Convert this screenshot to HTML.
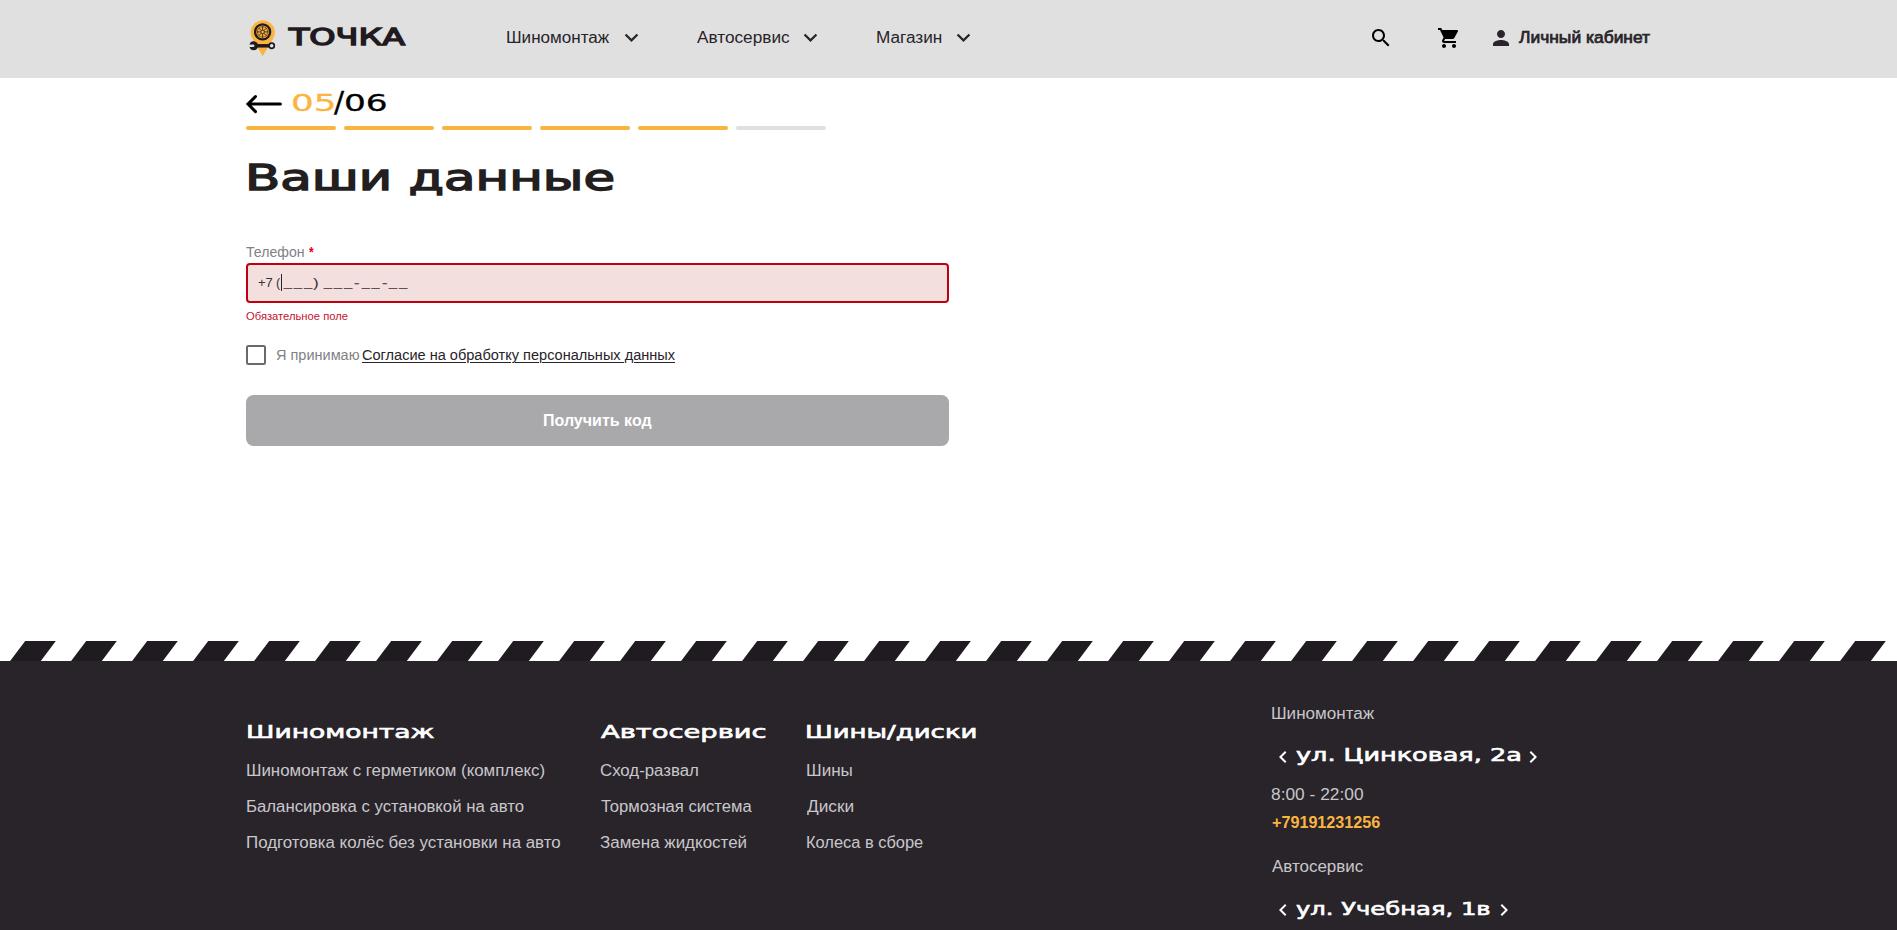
<!DOCTYPE html>
<html lang="ru">
<head>
<meta charset="utf-8">
<title>Точка — Ваши данные</title>
<style>
html,body{margin:0;padding:0}
body{width:1897px;height:930px;position:relative;overflow:hidden;background:#fff;font-family:"Liberation Sans",sans-serif;color:#28242a}
.abs{position:absolute}
.t{position:absolute;display:block;white-space:nowrap;line-height:1;transform-origin:0 0;margin:0;padding:0;border:0;background:none;text-decoration:none;letter-spacing:normal;text-align:left;cursor:default}
.hdr{left:0;top:0;width:1897px;height:78px;background:#e0e0e0}
.bar{position:absolute;top:126px;width:90px;height:4px;border-radius:2px;background:#fbb440}
.bar.off{background:#e0e0e0}
.input{left:246px;top:263px;width:699px;height:36px;border:2px solid #bf0010;border-radius:4px;background:#f3dfde}
.caret{left:281px;top:274px;width:1px;height:17px;background:#28242a}
.check{left:246px;top:345px;width:16px;height:16px;border:2px solid #6a696b;border-radius:2.5px;background:#fff}
.button{left:246px;top:395px;width:703px;height:51px;border-radius:7.5px;background:#a9a9ab}
.footer{left:0;top:661px;width:1897px;height:269px;background:#28242a}
svg{position:absolute;overflow:visible}
</style>
</head>
<body>
<div class="abs hdr"></div>

<!-- logo icon -->
<svg style="left:0;top:0" width="300" height="78" viewBox="0 0 300 78">
  <path d="M262.7 56.2 L252.4 38.8 A12.15 12.15 0 1 1 273.1 38.8 Z" fill="#fbb440"/>
  <circle cx="262.6" cy="31.9" r="7.55" fill="#f9ae38" stroke="#1f1b20" stroke-width="2.3"/>
  <g stroke="#1f1b20" fill="none">
    <circle cx="262.6" cy="31.9" r="5.3" stroke-width="0.55"/>
    <path stroke-width="0.85" d="M262.6 26.2v11.4M256.9 31.9h11.4M258.6 27.9l8 8M266.6 27.9l-8 8"/>
    <circle cx="262.6" cy="31.9" r="1.7" fill="#fdb94a" stroke-width="0.7"/>
  </g>
  <rect x="255.5" y="44.05" width="13.5" height="3.5" fill="#1f1b20"/>
  <circle cx="253.6" cy="45.8" r="4.5" fill="#1f1b20"/>
  <path d="M247.5 44.55H253.2A1.25 1.25 0 0 1 253.2 47.05H247.5Z" fill="#e0e0e0"/>
  <path d="M248.2 40.5L250.6 41.8L249.2 44.55H247.5ZM248.2 51.1L250.6 49.8L249.2 47.05H247.5Z" fill="#e0e0e0"/>
  <circle cx="271.7" cy="45.8" r="2.6" fill="#ebebeb" stroke="#1f1b20" stroke-width="1.7"/>
</svg>

<!-- nav chevrons -->
<svg style="left:618px;top:24px" width="27" height="27" viewBox="0 0 24 24"><path fill="#28242a" d="M16.59 8.59L12 13.17 7.41 8.59 6 10l6 6 6-6z"/></svg>
<svg style="left:797.3px;top:24px" width="27" height="27" viewBox="0 0 24 24"><path fill="#28242a" d="M16.59 8.59L12 13.17 7.41 8.59 6 10l6 6 6-6z"/></svg>
<svg style="left:949.7px;top:24px" width="27" height="27" viewBox="0 0 24 24"><path fill="#28242a" d="M16.59 8.59L12 13.17 7.41 8.59 6 10l6 6 6-6z"/></svg>

<!-- right icons -->
<svg style="left:1369px;top:26px" width="24" height="24" viewBox="0 0 24 24"><path fill="#000" d="M15.5 14h-.79l-.28-.27C15.41 12.59 16 11.11 16 9.5 16 5.91 13.09 3 9.5 3S3 5.91 3 9.5 5.91 16 9.5 16c1.61 0 3.09-.59 4.23-1.57l.27.28v.79l5 4.99L20.49 19l-4.99-5zm-6 0C7.01 14 5 11.99 5 9.5S7.01 5 9.5 5 14 7.01 14 9.5 11.99 14 9.5 14z"/></svg>
<svg style="left:1437px;top:26px" width="24" height="24" viewBox="0 0 24 24"><path fill="#000" d="M7 18c-1.1 0-1.99.9-1.99 2S5.900 22 7 22s2-.9 2-2-.9-2-2-2zM1 2v2h2l3.600 7.590-1.350 2.450c-.16.28-.25.61-.25.96 0 1.100.9 2 2 2h12v-2H7.420c-.14 0-.25-.11-.25-.25l.03-.12.9-1.630h7.450c.75 0 1.410-.41 1.750-1.030l3.580-6.490c.08-.14.12-.31.12-.48 0-.55-.45-1-1-1H5.210l-.94-2H1zm16 16c-1.100 0-1.990.9-1.990 2s.89 2 1.990 2 2-.9 2-2-.9-2-2-2z"/></svg>
<svg style="left:1489px;top:26px" width="24" height="24" viewBox="0 0 24 24"><path fill="#28242a" d="M12 12c2.210 0 4-1.790 4-4s-1.790-4-4-4-4 1.790-4 4 1.790 4 4 4zm0 2c-2.670 0-8 1.340-8 4v2h16v-2c0-2.660-5.330-4-8-4z"/></svg>

<!-- back arrow -->
<svg style="left:0;top:80px" width="300" height="50" viewBox="0 80 300 50"><path d="M255.5 96.5L248 104.05L255.5 111.6M248.3 104.05H280.4" fill="none" stroke="#000" stroke-width="3" stroke-linecap="round" stroke-linejoin="miter"/></svg>

<div class="bar" style="left:246px"></div>
<div class="bar" style="left:344px"></div>
<div class="bar" style="left:442px"></div>
<div class="bar" style="left:540px"></div>
<div class="bar" style="left:638px"></div>
<div class="bar off" style="left:736px"></div>

<div class="abs input"></div>
<div class="abs caret"></div>
<div class="abs check"></div>
<div class="abs button"></div>

<!-- stripes -->
<svg style="left:0;top:641px" width="1897" height="20" viewBox="0 0 1897 20">
  <defs><pattern id="st" x="0" y="0" width="61" height="20" patternUnits="userSpaceOnUse"><polygon points="25.2,0 55.8,0 40.8,20 10.1,20" fill="#1f1b20"/></pattern></defs>
  <rect x="0" y="0" width="1897" height="20" fill="url(#st)"/>
</svg>
<div class="abs footer"></div>

<!-- footer chevrons -->
<svg style="left:1271px;top:744.5px" width="24" height="24" viewBox="0 0 24 24"><path fill="#fff" d="M15.41 7.41L14 6l-6 6 6 6 1.410-1.410L10.830 12z"/></svg>
<svg style="left:1521px;top:744.5px" width="24" height="24" viewBox="0 0 24 24"><path fill="#fff" d="M10 6L8.590 7.410 13.170 12l-4.580 4.590L10 18l6-6z"/></svg>
<svg style="left:1271px;top:898px" width="24" height="24" viewBox="0 0 24 24"><path fill="#fff" d="M15.41 7.41L14 6l-6 6 6 6 1.410-1.410L10.830 12z"/></svg>
<svg style="left:1492px;top:898px" width="24" height="24" viewBox="0 0 24 24"><path fill="#fff" d="M10 6L8.590 7.410 13.170 12l-4.580 4.590L10 18l6-6z"/></svg>

<header>
<a class="t" style="left:289px;top:26px;font-family:'DejaVu Sans', 'Liberation Sans', sans-serif;font-size:23.75px;font-weight:400;color:#1f1b20;transform:scaleX(1.4037);-webkit-text-stroke:0.06em;">ТОЧКА</a>
<a class="t" style="left:506px;top:30px;font-family:'Liberation Sans', sans-serif;font-size:16.00px;font-weight:400;color:#28242a;transform:scaleX(1.0651);">Шиномонтаж</a>
<a class="t" style="left:697px;top:30px;font-family:'Liberation Sans', sans-serif;font-size:16.00px;font-weight:400;color:#28242a;transform:scaleX(1.0759);">Автосервис</a>
<a class="t" style="left:876px;top:30px;font-family:'Liberation Sans', sans-serif;font-size:16.00px;font-weight:400;color:#28242a;transform:scaleX(1.0730);">Магазин</a>
<a class="t" style="left:1519px;top:30px;font-family:'Liberation Sans', sans-serif;font-size:16.00px;font-weight:400;color:#28242a;transform:scaleX(1.0890);-webkit-text-stroke:0.7px;">Личный кабинет</a>
</header>
<main>
<span class="t" style="left:291px;top:91px;font-family:'DejaVu Sans', 'Liberation Sans', sans-serif;font-size:23.25px;font-weight:400;color:#fbb440;transform:scaleX(1.5372);-webkit-text-stroke:0.3px;">05</span>
<span class="t" style="left:334px;top:88px;font-family:'DejaVu Sans', 'Liberation Sans', sans-serif;font-size:28.75px;font-weight:400;color:#000;transform:scaleX(1.0405);-webkit-text-stroke:0.3px;">/</span>
<span class="t" style="left:344px;top:91px;font-family:'DejaVu Sans', 'Liberation Sans', sans-serif;font-size:23.25px;font-weight:400;color:#000;transform:scaleX(1.4769);-webkit-text-stroke:0.3px;">06</span>
<h1 class="t" style="left:245px;top:160px;font-family:'DejaVu Sans', 'Liberation Sans', sans-serif;font-size:36.25px;font-weight:400;color:#231f20;transform:scaleX(1.4181);-webkit-text-stroke:0.04em;">Ваши данные</h1>
<label class="t" style="left:246px;top:246px;font-family:'Liberation Sans', sans-serif;font-size:13.75px;font-weight:400;color:#828084;transform:scaleX(1.0272);">Телефон</label>
<span class="t" style="left:309px;top:245px;font-family:'Liberation Sans', sans-serif;font-size:14.00px;font-weight:700;color:#e3001b;transform:scaleX(0.8529);">*</span>
<span class="t" style="left:258px;top:277px;font-family:'Liberation Sans', sans-serif;font-size:12.50px;font-weight:400;color:#3a3236;transform:scaleX(1.0410);">+7</span>
<span class="t" style="left:276px;top:277px;font-family:'Liberation Sans', sans-serif;font-size:12.50px;font-weight:400;color:#3a3236;transform:scaleX(1.0061);">(</span>
<span class="t" style="left:284px;top:276px;font-family:'Liberation Sans', sans-serif;font-size:12.50px;font-weight:400;color:#5c5154;transform:scaleX(1.1274);letter-spacing:2px;-webkit-text-stroke:0.3px;">___</span>
<span class="t" style="left:313px;top:277px;font-family:'Liberation Sans', sans-serif;font-size:12.50px;font-weight:400;color:#3a3236;transform:scaleX(1.3716);">)</span>
<span class="t" style="left:324px;top:276px;font-family:'Liberation Sans', sans-serif;font-size:12.50px;font-weight:400;color:#5c5154;transform:scaleX(1.1274);letter-spacing:2px;-webkit-text-stroke:0.3px;">___</span>
<span class="t" style="left:354px;top:277px;font-family:'Liberation Sans', sans-serif;font-size:12.50px;font-weight:400;color:#5c5154;transform:scaleX(1.3095);-webkit-text-stroke:0.3px;">-</span>
<span class="t" style="left:362px;top:276px;font-family:'Liberation Sans', sans-serif;font-size:12.50px;font-weight:400;color:#5c5154;transform:scaleX(1.0955);letter-spacing:2px;-webkit-text-stroke:0.3px;">__</span>
<span class="t" style="left:382px;top:277px;font-family:'Liberation Sans', sans-serif;font-size:12.50px;font-weight:400;color:#5c5154;transform:scaleX(1.3095);-webkit-text-stroke:0.3px;">-</span>
<span class="t" style="left:389px;top:276px;font-family:'Liberation Sans', sans-serif;font-size:12.50px;font-weight:400;color:#5c5154;transform:scaleX(1.1343);letter-spacing:2px;-webkit-text-stroke:0.3px;">__</span>
<p class="t" style="left:246px;top:311px;font-family:'Liberation Sans', sans-serif;font-size:10.75px;font-weight:400;color:#c4122f;transform:scaleX(1.0430);">Обязательное поле</p>
<span class="t" style="left:276px;top:348px;font-family:'Liberation Sans', sans-serif;font-size:14.00px;font-weight:400;color:#828084;transform:scaleX(1.0361);">Я принимаю</span>
<a class="t" style="left:362px;top:348px;font-family:'Liberation Sans', sans-serif;font-size:14.00px;font-weight:400;color:#28242a;transform:scaleX(1.0391);text-decoration:underline;text-underline-offset:1.5px;text-decoration-thickness:1px;">Согласие на обработку персональных данных</a>
<button class="t" style="left:543px;top:413px;font-family:'Liberation Sans', sans-serif;font-size:16.00px;font-weight:700;color:#fff;transform:scaleX(1.0015);">Получить код</button>
</main>
<footer>
<h3 class="t" style="left:246px;top:724px;font-family:'DejaVu Sans', 'Liberation Sans', sans-serif;font-size:17.50px;font-weight:400;color:#fff;transform:scaleX(1.5166);-webkit-text-stroke:0.036em;">Шиномонтаж</h3>
<h3 class="t" style="left:601px;top:724px;font-family:'DejaVu Sans', 'Liberation Sans', sans-serif;font-size:17.50px;font-weight:400;color:#fff;transform:scaleX(1.5620);-webkit-text-stroke:0.036em;">Автосервис</h3>
<h3 class="t" style="left:805px;top:724px;font-family:'DejaVu Sans', 'Liberation Sans', sans-serif;font-size:17.50px;font-weight:400;color:#fff;transform:scaleX(1.4828);-webkit-text-stroke:0.036em;">Шины/диски</h3>
<a class="t" style="left:246px;top:763px;font-family:'Liberation Sans', sans-serif;font-size:16.00px;font-weight:400;color:#c9c7ca;transform:scaleX(1.0534);">Шиномонтаж с герметиком (комплекс)</a>
<a class="t" style="left:246px;top:799px;font-family:'Liberation Sans', sans-serif;font-size:16.00px;font-weight:400;color:#c9c7ca;transform:scaleX(1.0465);">Балансировка с установкой на авто</a>
<a class="t" style="left:246px;top:835px;font-family:'Liberation Sans', sans-serif;font-size:16.00px;font-weight:400;color:#c9c7ca;transform:scaleX(1.0554);">Подготовка колёс без установки на авто</a>
<a class="t" style="left:600px;top:763px;font-family:'Liberation Sans', sans-serif;font-size:16.00px;font-weight:400;color:#c9c7ca;transform:scaleX(1.0509);">Сход-развал</a>
<a class="t" style="left:601px;top:799px;font-family:'Liberation Sans', sans-serif;font-size:16.00px;font-weight:400;color:#c9c7ca;transform:scaleX(1.0381);">Тормозная система</a>
<a class="t" style="left:600px;top:835px;font-family:'Liberation Sans', sans-serif;font-size:16.00px;font-weight:400;color:#c9c7ca;transform:scaleX(1.0603);">Замена жидкостей</a>
<a class="t" style="left:806px;top:763px;font-family:'Liberation Sans', sans-serif;font-size:16.00px;font-weight:400;color:#c9c7ca;transform:scaleX(1.0667);">Шины</a>
<a class="t" style="left:807px;top:799px;font-family:'Liberation Sans', sans-serif;font-size:16.00px;font-weight:400;color:#c9c7ca;transform:scaleX(1.0787);">Диски</a>
<a class="t" style="left:806px;top:835px;font-family:'Liberation Sans', sans-serif;font-size:16.00px;font-weight:400;color:#c9c7ca;transform:scaleX(1.0261);">Колеса в сборе</a>
<div class="t" style="left:1271px;top:706px;font-family:'Liberation Sans', sans-serif;font-size:16.00px;font-weight:400;color:#c9c7ca;transform:scaleX(1.0651);">Шиномонтаж</div>
<h3 class="t" style="left:1296px;top:747px;font-family:'DejaVu Sans', 'Liberation Sans', sans-serif;font-size:17.50px;font-weight:400;color:#fff;transform:scaleX(1.4578);-webkit-text-stroke:0.036em;">ул. Цинковая, 2а</h3>
<div class="t" style="left:1271px;top:787px;font-family:'Liberation Sans', sans-serif;font-size:16.00px;font-weight:400;color:#c9c7ca;transform:scaleX(1.0834);">8:00 - 22:00</div>
<a class="t" style="left:1272px;top:815px;font-family:'Liberation Sans', sans-serif;font-size:16.00px;font-weight:700;color:#fbb440;transform:scaleX(1.0097);">+79191231256</a>
<div class="t" style="left:1272px;top:859px;font-family:'Liberation Sans', sans-serif;font-size:16.00px;font-weight:400;color:#c9c7ca;transform:scaleX(1.0594);">Автосервис</div>
<h3 class="t" style="left:1296px;top:901px;font-family:'DejaVu Sans', 'Liberation Sans', sans-serif;font-size:17.25px;font-weight:400;color:#fff;transform:scaleX(1.4055);-webkit-text-stroke:0.036em;">ул. Учебная, 1в</h3>
</footer>
</body>
</html>
